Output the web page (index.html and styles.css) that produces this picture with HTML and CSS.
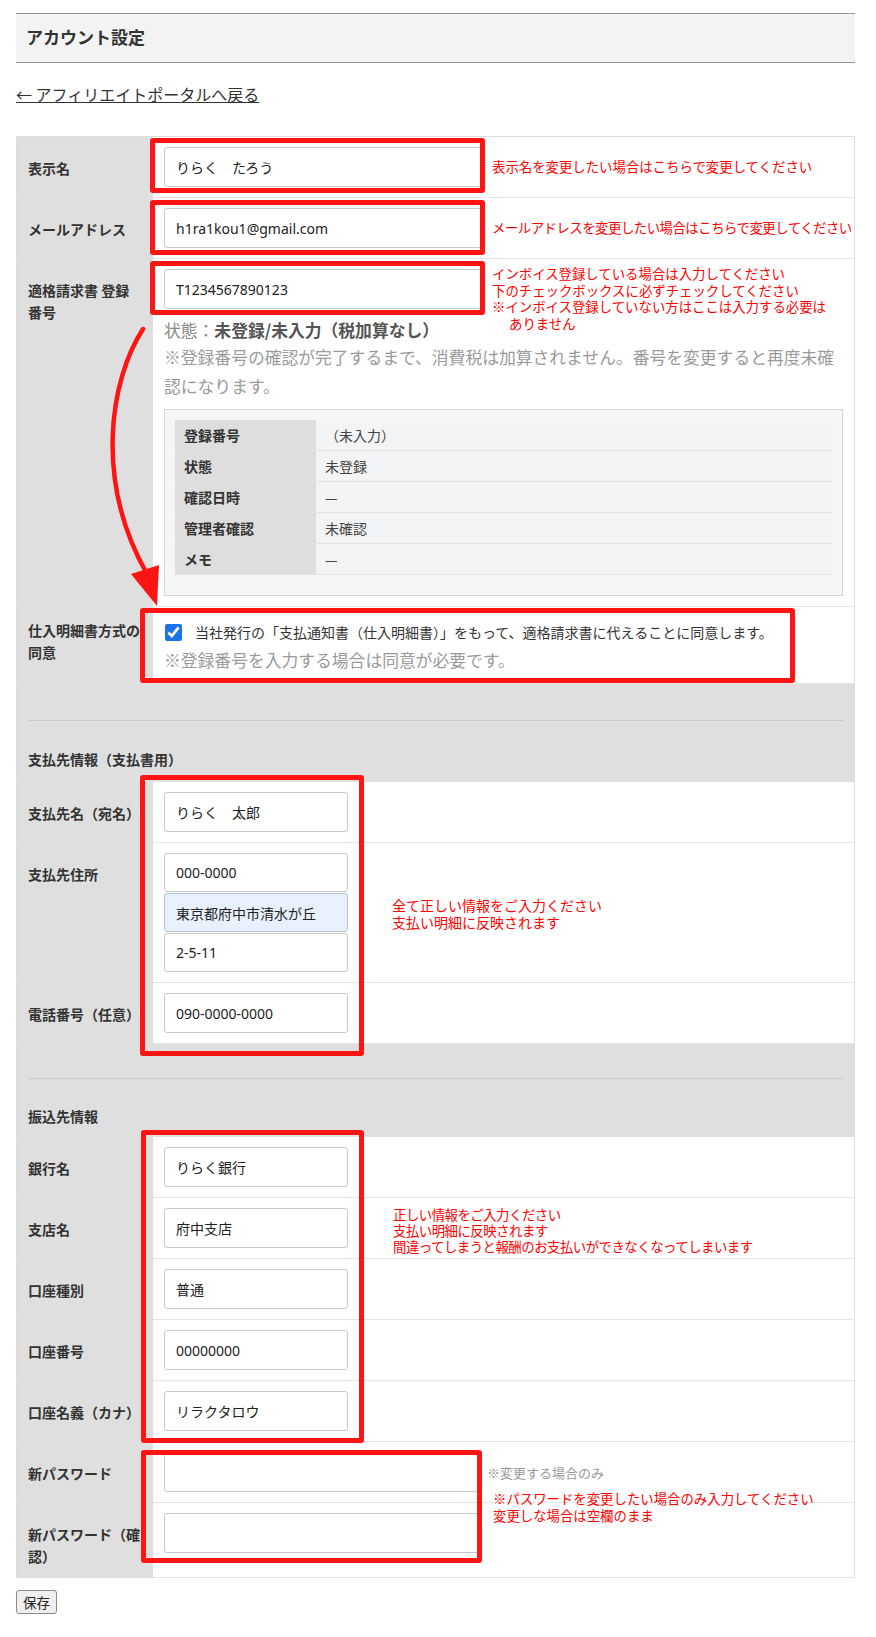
FILE: index.html
```html
<!DOCTYPE html>
<html lang="ja">
<head>
  <meta charset="UTF-8" />
  <meta name="viewport" content="width=device-width, initial-scale=1.0" />
  <title>アカウント設定</title>
  <link rel="stylesheet" href="styles.css">
</head>
<body>
  <div class="page">
    <div class="page-head">
      <h1>アカウント設定</h1>
    </div>

    <p class="back"><a href="#">← アフィリエイトポータルへ戻る</a></p>

    <form class="account-form" onsubmit="return false;">
      <table class="form-table">
        <tr>
          <th>表示名</th>
          <td><input class="field field-wide" type="text" value="りらく　たろう"></td>
        </tr>
        <tr>
          <th>メールアドレス</th>
          <td><input class="field field-wide" type="email" value="h1ra1kou1@gmail.com"></td>
        </tr>
        <tr>
          <th>適格請求書 登録番号</th>
          <td>
            <input class="field field-wide" type="text" value="T1234567890123">
            <p class="inv-status"><span class="inv-key">状態：</span><strong>未登録/未入力（税加算なし）</strong></p>
            <p class="help">※登録番号の確認が完了するまで、消費税は加算されません。番号を変更すると再度未確認になります。</p>
            <div class="inv-box">
              <table class="inv-table">
                <tr><th>登録番号</th><td>（未入力）</td></tr>
                <tr><th>状態</th><td>未登録</td></tr>
                <tr><th>確認日時</th><td>—</td></tr>
                <tr><th>管理者確認</th><td>未確認</td></tr>
                <tr><th>メモ</th><td>—</td></tr>
              </table>
            </div>
          </td>
        </tr>
        <tr>
          <th class="th-agree">仕入明細書方式の同意</th>
          <td>
            <label class="agree"><input type="checkbox" checked><span>当社発行の「支払通知書（仕入明細書）」をもって、適格請求書に代えることに同意します。</span></label>
            <p class="help help-agree">※登録番号を入力する場合は同意が必要です。</p>
          </td>
        </tr>

        <tr class="section">
          <td colspan="2"><hr><h2>支払先情報（支払書用）</h2></td>
        </tr>
        <tr>
          <th>支払先名（宛名）</th>
          <td><input class="field" type="text" value="りらく　太郎"></td>
        </tr>
        <tr>
          <th>支払先住所</th>
          <td>
            <div class="address">
              <input class="field field-sm" type="text" value="000-0000">
              <input class="field field-sm field-fill" type="text" value="東京都府中市清水が丘">
              <input class="field field-sm" type="text" value="2-5-11">
            </div>
          </td>
        </tr>
        <tr>
          <th>電話番号（任意）</th>
          <td><input class="field" type="tel" value="090-0000-0000"></td>
        </tr>

        <tr class="section section-bank">
          <td colspan="2"><hr><h2>振込先情報</h2></td>
        </tr>
        <tr>
          <th>銀行名</th>
          <td><input class="field" type="text" value="りらく銀行"></td>
        </tr>
        <tr>
          <th>支店名</th>
          <td><input class="field" type="text" value="府中支店"></td>
        </tr>
        <tr>
          <th>口座種別</th>
          <td><input class="field" type="text" value="普通"></td>
        </tr>
        <tr>
          <th>口座番号</th>
          <td><input class="field" type="text" value="00000000"></td>
        </tr>
        <tr>
          <th>口座名義（カナ）</th>
          <td><input class="field" type="text" value="リラクタロウ"></td>
        </tr>

        <tr>
          <th>新パスワード</th>
          <td>
            <div class="pass-line">
              <input class="field field-wide" type="password">
              <span class="hint">※変更する場合のみ</span>
            </div>
          </td>
        </tr>
        <tr>
          <th>新パスワード（確認）</th>
          <td><input class="field field-wide" type="password"></td>
        </tr>
      </table>

      <button class="save-btn" type="submit">保存</button>
    </form>

    <!-- red annotations drawn over the screenshot -->
    <div class="marks">
      <svg class="arrow" width="876" height="1637" viewBox="0 0 876 1637">
        <path d="M143 329 C 110 380, 94 480, 147 574" fill="none" stroke="#ff1414" stroke-width="4.5" stroke-linecap="round"/>
        <polygon points="131,574 159,565 157,606" fill="#ff1414"/>
      </svg>

      <div class="box m-name"></div>
      <div class="box m-mail"></div>
      <div class="box m-invoice"></div>
      <div class="box m-agree"></div>
      <div class="box m-payee"></div>
      <div class="box m-bank"></div>
      <div class="box m-pass"></div>

      <p class="note n-name">表示名を変更したい場合はこちらで変更してください</p>
      <p class="note n-mail">メールアドレスを変更したい場合はこちらで変更してください</p>
      <p class="note n-invoice">インボイス登録している場合は入力してください<br>下のチェックボックスに必ずチェックしてください<br>※インボイス登録していない方はここは入力する必要は<br><span class="indent">ありません</span></p>
      <p class="note n-payee">全て正しい情報をご入力ください<br>支払い明細に反映されます</p>
      <p class="note n-bank">正しい情報をご入力ください<br>支払い明細に反映されます<br>間違ってしまうと報酬のお支払いができなくなってしまいます</p>
      <p class="note n-pass">※パスワードを変更したい場合のみ入力してください<br>変更しな場合は空欄のまま</p>
    </div>
  </div>
</body>
</html>
```

FILE: styles.css
```css
body {
  margin: 0;
  font-family: "Noto Sans CJK JP", sans-serif;
  color: #333;
  background: #fff;
}
.page {
  position: relative;
  padding: 13px 21px 20px 16px;
  min-height: 1600px;
}
.page-head {
  background: #f3f3f3;
  border-top: 1px solid #999;
  border-bottom: 1px solid #999;
  height: 48px;
}
.page-head h1 {
  margin: 0;
  padding: 1px 10px 0;
  font-size: 17px;
  line-height: 44px;
  font-weight: 700;
  color: #333;
}
.back {
  margin: 19px 0 30px;
  font-size: 16px;
  line-height: 24px;
}
.back a {
  color: #333;
  text-decoration: underline;
}

.form-table {
  width: 100%;
  border-collapse: collapse;
  border: 1px solid #ddd;
}
.form-table > tbody > tr > th {
  width: 114px;
  padding: 20px 11px 9px;
  background: #dfdfdf;
  text-align: left;
  vertical-align: top;
  font-size: 14px;
  line-height: 1.6;
  font-weight: 700;
  color: #333;
  border-bottom: 1px solid #dfdfdf;
}
.form-table > tbody > tr > th.th-agree {
  padding-top: 12px;
}
.form-table > tbody > tr > td {
  padding: 10px 11px;
  background: #fff;
  vertical-align: top;
  border-bottom: 1px solid #e4e4e4;
}
.form-table > tbody > tr.section > td {
  background: #dfdfdf;
  padding: 36px 11px 11px;
  border-bottom: 1px solid #dfdfdf;
}
.form-table > tbody > tr.section-bank > td {
  padding: 34px 11px 9px;
}
.section hr {
  margin: 0;
  border: 0;
  border-top: 1px solid #c9c9c9;
}
.section h2 {
  margin: 27px 0 0;
  font-size: 14px;
  line-height: 22px;
  font-weight: 700;
  color: #333;
}
.section-bank h2 {
  margin-top: 26px;
}

.field {
  display: block;
  box-sizing: border-box;
  width: 184px;
  height: 40px;
  margin: 0;
  padding: 0 11px;
  border: 1px solid #c8c8c8;
  border-radius: 3px;
  background: #fff;
  font-family: "Noto Sans", "Noto Sans CJK JP", sans-serif;
  font-size: 14px;
  color: #222;
}
.field-wide {
  width: 318px;
}
.field-sm {
  height: 39px;
}
.field-fill {
  background: #e8f0fe;
  border-color: #b9c3d3;
}
.address {
  display: flex;
  flex-direction: column;
  gap: 1px;
}
.pass-line {
  display: flex;
  align-items: center;
  gap: 5px;
}
.hint {
  font-size: 13px;
  color: #999;
}

.inv-status {
  margin: 8px 0 0;
  font-size: 16.8px;
  line-height: 26px;
  color: #555;
}
.inv-key {
  color: #888;
}
.inv-status strong {
  font-weight: 700;
  color: #555;
}
.help {
  margin: 0;
  font-size: 16.8px;
  line-height: 29px;
  color: #9a9a9a;
}
.help-agree {
  line-height: 26px;
}
.inv-box {
  margin-top: 8px;
  padding: 10px 10px 20px;
  border: 1px solid #d6d6d6;
  background: #f5f6f7;
}
.inv-table {
  width: 100%;
  border-collapse: collapse;
  font-size: 14px;
}
.inv-table th,
.inv-table td {
  height: 30px;
  padding: 0 9px;
  text-align: left;
  border-bottom: 1px solid #e2e3e4;
}
.inv-table th {
  width: 123px;
  background: #dedede;
  font-weight: 700;
  color: #333;
}
.inv-table td {
  background: #f3f4f5;
  color: #444;
}

.agree {
  display: flex;
  align-items: center;
  gap: 13px;
  height: 30px;
  padding-left: 1px;
  font-size: 14px;
  color: #333;
}
.agree input {
  width: 17px;
  height: 17px;
  margin: 0;
  accent-color: #1a73e8;
}

.save-btn {
  margin-top: 12px;
  height: 24px;
  padding: 0 6px;
  font-family: "Noto Sans CJK JP", sans-serif;
  font-size: 13.5px;
  color: #222;
  background: #efefef;
  border: 1px solid #8a8a8a;
  border-radius: 3px;
}

/* overlay annotations */
.marks {
  position: absolute;
  left: 0;
  top: 0;
  width: 876px;
  height: 1637px;
  pointer-events: none;
}
.arrow {
  position: absolute;
  left: 0;
  top: 0;
}
.box {
  position: absolute;
  box-sizing: border-box;
  border: 5px solid #ff1414;
  border-radius: 3px;
}
.m-name { left: 150px; top: 138px; width: 335px; height: 55px; }
.m-mail { left: 150px; top: 200px; width: 335px; height: 55px; }
.m-invoice { left: 150px; top: 261px; width: 335px; height: 54px; }
.m-agree { left: 140px; top: 608px; width: 655px; height: 75px; }
.m-payee { left: 140px; top: 775px; width: 224px; height: 281px; }
.m-bank { left: 141px; top: 1130px; width: 223px; height: 313px; }
.m-pass { left: 141px; top: 1450px; width: 341px; height: 113px; }

.note {
  position: absolute;
  margin: 0;
  font-family: "Noto Sans CJK JP", sans-serif;
  font-size: 13.4px;
  line-height: 16.5px;
  color: #ff0000;
  white-space: nowrap;
}
.note .indent {
  padding-left: 17px;
}
.n-name { left: 492px; top: 158px; }
.n-mail { left: 492px; top: 219px; letter-spacing: -0.5px; }
.n-invoice { left: 492px; top: 265px; }
.n-payee { left: 392px; top: 897px; font-size: 14px; line-height: 17px; }
.n-bank { left: 393px; top: 1206px; line-height: 16px; letter-spacing: -0.5px; }
.n-pass { left: 493px; top: 1490px; line-height: 17px; }
```
